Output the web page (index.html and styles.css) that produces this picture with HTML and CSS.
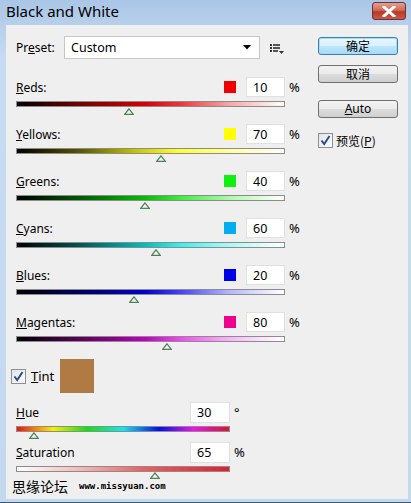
FILE: index.html
```html
<!DOCTYPE html>
<html lang="en">
<head>
    <meta charset="UTF-8">
    <meta name="viewport" content="width=device-width, initial-scale=1.0">
    <title>Black and White</title>
    <link rel="stylesheet" href="styles.css">
</head>
<body>
<div class="window">
    <div class="titlebar">
        <span class="title">Black and White</span>
        <span class="close">
            <svg width="14" height="11" viewBox="0 0 14 11"><path d="M2 1 L12 10 M12 1 L2 10" stroke="#fff" stroke-width="3" stroke-linecap="square"/></svg>
        </span>
    </div>

    <div class="client">
        <div class="main">
            <div class="preset">
                <span class="label">Pr<u>e</u>set:</span>
                <div class="select">
                    <span>Custom</span>
                    <svg width="8" height="5" viewBox="0 0 8 5"><path d="M0 0 H8 L4 4.5 Z" fill="#000"/></svg>
                </div>
                <svg class="menu-icon" width="14" height="10" viewBox="0 0 14 10">
                    <rect x="0" y="0" width="2" height="2" fill="#333"/><rect x="3" y="0" width="7" height="2" fill="#555"/>
                    <rect x="0" y="3" width="2" height="2" fill="#333"/><rect x="3" y="3" width="7" height="2" fill="#555"/>
                    <rect x="0" y="6" width="2" height="2" fill="#333"/><rect x="3" y="6" width="5" height="2" fill="#555"/>
                    <path d="M9 7 H14 L11.5 10 Z" fill="#333"/>
                </svg>
            </div>

            <div class="slider">
                <div class="slider-head">
                    <span class="label"><u>R</u>eds:</span>
                    <span class="swatch sw-red"></span>
                    <input class="num" type="text" value="10">
                    <span class="unit">%</span>
                </div>
                <div class="track track-reds"></div>
                <div class="thumb-row"><svg class="thumb" style="left: 42%" width="10" height="7" viewBox="0 0 10 7"><path d="M5 0.8 L9.3 6.4 H0.7 Z" fill="#eef4ee" stroke="#52805a" stroke-width="1.2"/></svg></div>
            </div>

            <div class="slider">
                <div class="slider-head">
                    <span class="label"><u>Y</u>ellows:</span>
                    <span class="swatch sw-yellow"></span>
                    <input class="num" type="text" value="70">
                    <span class="unit">%</span>
                </div>
                <div class="track track-yellows"></div>
                <div class="thumb-row"><svg class="thumb" style="left: 54%" width="10" height="7" viewBox="0 0 10 7"><path d="M5 0.8 L9.3 6.4 H0.7 Z" fill="#eef4ee" stroke="#52805a" stroke-width="1.2"/></svg></div>
            </div>

            <div class="slider">
                <div class="slider-head">
                    <span class="label"><u>G</u>reens:</span>
                    <span class="swatch sw-green"></span>
                    <input class="num" type="text" value="40">
                    <span class="unit">%</span>
                </div>
                <div class="track track-greens"></div>
                <div class="thumb-row"><svg class="thumb" style="left: 48%" width="10" height="7" viewBox="0 0 10 7"><path d="M5 0.8 L9.3 6.4 H0.7 Z" fill="#eef4ee" stroke="#52805a" stroke-width="1.2"/></svg></div>
            </div>

            <div class="slider">
                <div class="slider-head">
                    <span class="label"><u>C</u>yans:</span>
                    <span class="swatch sw-cyan"></span>
                    <input class="num" type="text" value="60">
                    <span class="unit">%</span>
                </div>
                <div class="track track-cyans"></div>
                <div class="thumb-row"><svg class="thumb" style="left: 52%" width="10" height="7" viewBox="0 0 10 7"><path d="M5 0.8 L9.3 6.4 H0.7 Z" fill="#eef4ee" stroke="#52805a" stroke-width="1.2"/></svg></div>
            </div>

            <div class="slider">
                <div class="slider-head">
                    <span class="label"><u>B</u>lues:</span>
                    <span class="swatch sw-blue"></span>
                    <input class="num" type="text" value="20">
                    <span class="unit">%</span>
                </div>
                <div class="track track-blues"></div>
                <div class="thumb-row"><svg class="thumb" style="left: 44%" width="10" height="7" viewBox="0 0 10 7"><path d="M5 0.8 L9.3 6.4 H0.7 Z" fill="#eef4ee" stroke="#52805a" stroke-width="1.2"/></svg></div>
            </div>

            <div class="slider">
                <div class="slider-head">
                    <span class="label"><u>M</u>agentas:</span>
                    <span class="swatch sw-magenta"></span>
                    <input class="num" type="text" value="80">
                    <span class="unit">%</span>
                </div>
                <div class="track track-magentas"></div>
                <div class="thumb-row"><svg class="thumb" style="left: 56%" width="10" height="7" viewBox="0 0 10 7"><path d="M5 0.8 L9.3 6.4 H0.7 Z" fill="#eef4ee" stroke="#52805a" stroke-width="1.2"/></svg></div>
            </div>

            <div class="tint">
                <span class="check"><svg width="11" height="11" viewBox="0 0 11 11"><path d="M1.5 5.5 L4.2 9 L9.5 1" fill="none" stroke="#2a4f8f" stroke-width="2"/></svg></span>
                <span class="tint-label"><u>T</u>int</span>
                <span class="tint-swatch"></span>
            </div>

            <div class="slider small">
                <div class="slider-head">
                    <span class="label"><u>H</u>ue</span>
                    <input class="num" type="text" value="30">
                    <span class="unit">&deg;</span>
                </div>
                <div class="track track-hue"></div>
                <div class="thumb-row"><svg class="thumb" style="left: 8.3%" width="10" height="7" viewBox="0 0 10 7"><path d="M5 0.8 L9.3 6.4 H0.7 Z" fill="#eef4ee" stroke="#52805a" stroke-width="1.2"/></svg></div>
            </div>

            <div class="slider small sat">
                <div class="slider-head">
                    <span class="label"><u>S</u>aturation</span>
                    <input class="num" type="text" value="65">
                    <span class="unit">%</span>
                </div>
                <div class="track track-sat"></div>
                <div class="thumb-row"><svg class="thumb" style="left: 65%" width="10" height="7" viewBox="0 0 10 7"><path d="M5 0.8 L9.3 6.4 H0.7 Z" fill="#eef4ee" stroke="#52805a" stroke-width="1.2"/></svg></div>
            </div>

            <div class="watermark"><span class="wm-cn">思缘论坛</span><span class="wm-url">www.missyuan.com</span></div>
        </div>

        <div class="side">
            <button class="btn btn-default">确定</button>
            <button class="btn">取消</button>
            <button class="btn btn-auto"><u>A</u>uto</button>
            <div class="preview">
                <span class="check"><svg width="11" height="11" viewBox="0 0 11 11"><path d="M1.5 5.5 L4.2 9 L9.5 1" fill="none" stroke="#2a4f8f" stroke-width="2"/></svg></span>
                <span class="preview-label">预览(<u>P</u>)</span>
            </div>
        </div>
    </div>
</div>
</body>
</html>
```

FILE: styles.css
```css
body {
    margin: 0;
    padding: 0;
    font-family: "Noto Sans", "Noto Sans CJK SC", sans-serif;
    font-size: 12px;
    color: #000;
    background: #c4d8ee;
}
.window {
    width: 411px;
    height: 503px;
    box-sizing: border-box;
    padding: 0 3px 3px 6px;
    background: linear-gradient(#aac6e6, #c8dcf1 60px, #c4d8ee);
    border-bottom: 1px solid #3a5a7a;
    display: flex;
    flex-direction: column;
}
.titlebar {
    height: 25px;
    flex: none;
    display: flex;
    align-items: center;
    justify-content: space-between;
    margin-left: -6px;
    margin-right: -3px;
    padding-left: 6px;
}
.title {
    font-size: 15px;
    line-height: 1;
    padding-bottom: 2px;
}
.close {
    width: 34px;
    height: 18px;
    margin-right: 5px;
    margin-top: -3px;
    box-sizing: border-box;
    border: 1px solid #6b3434;
    border-radius: 3px;
    background: linear-gradient(#e3a192, #cf6b57 45%, #bb3a22 55%, #c9574a);
    display: flex;
    align-items: center;
    justify-content: center;
}
.client {
    flex: 1;
    background: #efefef;
    display: flex;
    position: relative;
}
.main {
    width: 296px;
    padding: 11px 0 0 10px;
}
.label u, .btn u, .tint-label u, .preview-label u {
    text-decoration: underline;
}
.preset {
    display: flex;
    align-items: center;
    height: 23px;
}
.preset .label {
    width: 48px;
}
.select {
    width: 196px;
    height: 23px;
    box-sizing: border-box;
    background: #fff;
    border: 1px solid #c8c8c8;
    display: flex;
    align-items: center;
    justify-content: space-between;
    padding: 0 8px 0 6px;
    font-size: 12.5px;
}
.menu-icon {
    margin-left: 10px;
    margin-top: 2px;
}
.slider {
    margin-top: 18px;
}
.slider + .slider {
    margin-top: 9px;
}
.slider-head {
    display: flex;
    align-items: center;
    height: 20px;
    width: 289px;
}
.slider-head .label {
    flex: 1;
}
.swatch {
    width: 12px;
    height: 12px;
    margin-right: 10px;
}
.sw-red { background: #f00000; }
.sw-yellow { background: #ffff00; }
.sw-green { background: #10f010; }
.sw-cyan { background: #00aeef; }
.sw-blue { background: #0000e8; }
.sw-magenta { background: #ec008c; }
.num {
    width: 39px;
    height: 20px;
    box-sizing: border-box;
    border: 1px solid #e0e0e0;
    background: #fff;
    padding: 0 0 0 6px;
    font-family: "Noto Sans", sans-serif;
    font-size: 12.5px;
    color: #000;
    outline: none;
}
.unit {
    width: 16px;
    padding-left: 4px;
    font-size: 13px;
}
.track {
    margin-top: 4px;
    width: 269px;
    height: 6px;
    box-sizing: border-box;
    border: 1px solid #8c8c8c;
}
.track-reds { background: linear-gradient(to right, #000 0%, #6a0000 22%, #d80000 48%, #f03a3a 62%, #f8a8a8 80%, #fff 100%); }
.track-yellows { background: linear-gradient(to right, #000 0%, #505000 22%, #c8c800 45%, #ffff30 60%, #ffffa0 80%, #fff 100%); }
.track-greens { background: linear-gradient(to right, #000 0%, #005400 22%, #00c000 48%, #40f040 62%, #b0f8b0 80%, #fff 100%); }
.track-cyans { background: linear-gradient(to right, #000 0%, #005050 22%, #00c0c0 48%, #40f0f0 62%, #b0f8f8 80%, #fff 100%); }
.track-blues { background: linear-gradient(to right, #000 0%, #00005a 22%, #0000d0 48%, #4848f8 62%, #b8b8fc 80%, #fff 100%); }
.track-magentas { background: linear-gradient(to right, #000 0%, #560056 22%, #c000c0 48%, #f050f0 62%, #f8b8f8 80%, #fff 100%); }
.track-hue { background: linear-gradient(to right, #f01010, #f8f000 17%, #10e010 33%, #10e8f0 50%, #0010f0 67%, #f010f0 83%, #e01030); }
.track-sat { background: linear-gradient(to right, #ffffff, #f4b8b8 30%, #e86060 60%, #e02030); }
.thumb-row {
    position: relative;
    width: 269px;
    height: 7px;
    margin-top: 1px;
}
.thumb {
    position: absolute;
    top: 0;
    transform: translateX(-50%);
    display: block;
}
.tint {
    display: flex;
    align-items: center;
    margin: 9px 0 0 -5px;
    height: 34px;
}
.check {
    width: 15px;
    height: 15px;
    box-sizing: border-box;
    border: 1px solid #8e8f8f;
    background: linear-gradient(135deg, #e2e4e8, #fdfdfd);
    display: inline-flex;
    align-items: center;
    justify-content: center;
}
.tint-label {
    margin-left: 5px;
    width: 29px;
    font-size: 13px;
}
.tint-swatch {
    width: 34px;
    height: 34px;
    background: #b07a44;
}
.small .slider-head {
    width: 234px;
}
.small .num {
    width: 40px;
    height: 21px;
}
.small .track, .small .thumb-row {
    width: 214px;
}
.small .track {
    margin-top: 4px;
}
.slider.small {
    margin-top: 9px;
}
.slider.sat {
    margin-top: 3px;
}
.small .thumb-row {
    margin-top: 0;
}
.watermark {
    position: absolute;
    left: 6px;
    top: 454px;
    display: flex;
    align-items: center;
}
.wm-cn {
    font-family: "Noto Sans CJK SC", sans-serif;
    font-size: 14px;
    line-height: 1;
}
.wm-url {
    margin-left: 11px;
    font-family: "DejaVu Sans Mono", monospace;
    font-size: 9px;
    font-weight: bold;
}
.side {
    padding-top: 12px;
    margin-left: 6px;
    display: flex;
    flex-direction: column;
    width: 80px;
}
.btn {
    width: 80px;
    height: 18px;
    padding: 0;
    box-sizing: border-box;
    border: 1px solid #707070;
    border-radius: 3px;
    background: linear-gradient(#f2f2f2, #ebebeb 50%, #dddddd 50%, #cfcfcf);
    font-family: "Noto Sans CJK SC", "Noto Sans", sans-serif;
    font-size: 12px;
    line-height: 16px;
    color: #000;
    margin-bottom: 10px;
}
.btn-default {
    border-color: #3c7fb1;
    background: linear-gradient(#eaf6fd, #d9f0fc 50%, #bee6fd 50%, #a7d9f5);
    box-shadow: inset 0 0 0 1px #9fe0f8;
}
.btn-auto {
    margin-top: 7px;
    margin-bottom: 14px;
    font-family: "Noto Sans", sans-serif;
}
.preview {
    display: flex;
    align-items: center;
}
.preview-label {
    margin-left: 3px;
    font-family: "Noto Sans CJK SC", sans-serif;
    font-size: 12px;
}
```
